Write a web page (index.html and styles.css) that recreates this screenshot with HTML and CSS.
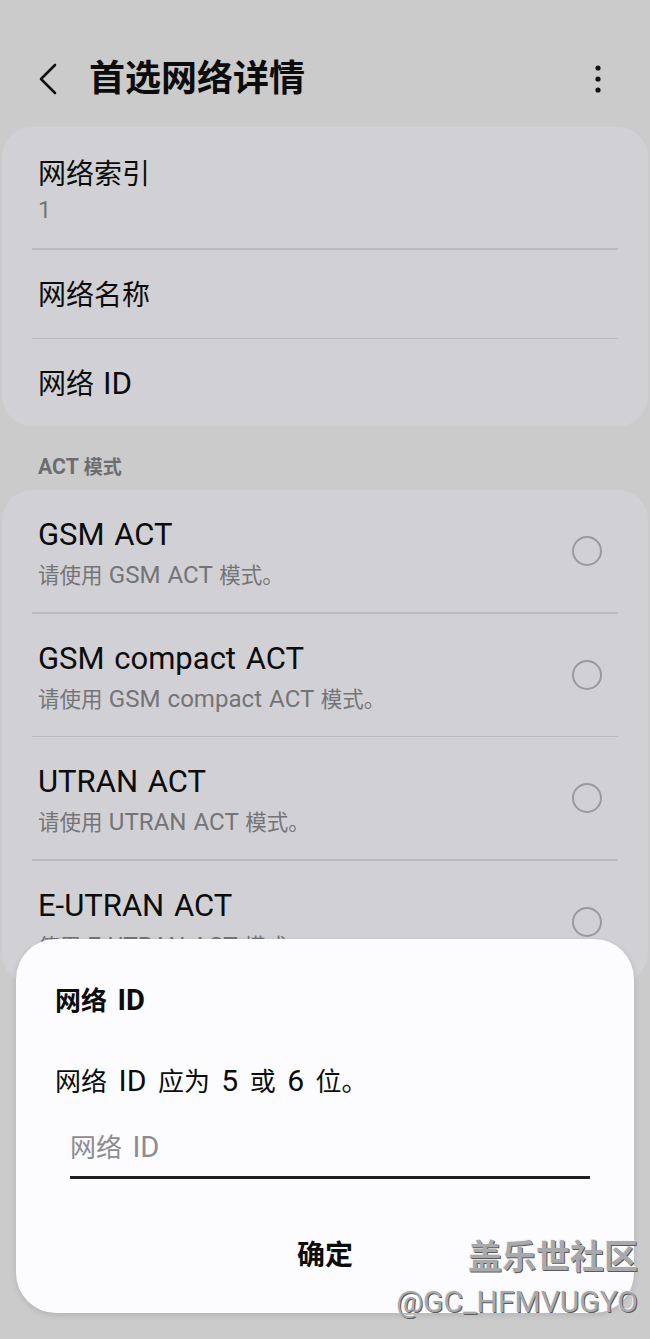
FILE: index.html
```html
<!DOCTYPE html>
<html lang="zh-CN">
<head>
    <meta charset="UTF-8">
    <meta name="viewport" content="width=device-width, initial-scale=1.0">
    <title>首选网络详情</title>
    <link rel="stylesheet" href="styles.css">
</head>
<body>

<div class="screen">
    <!-- Header -->
    <div class="header">
        <svg class="back-icon" width="24" height="34" viewBox="0 0 24 34">
            <polyline points="17,3 3,17 17,31" fill="none" stroke="#111" stroke-width="2.6" stroke-linecap="round" stroke-linejoin="round"/>
        </svg>
        <h1 class="title">首选网络详情</h1>
        <svg class="more-icon" width="10" height="30" viewBox="0 0 10 30">
            <circle cx="5" cy="4" r="2.6" fill="#111"/>
            <circle cx="5" cy="15" r="2.6" fill="#111"/>
            <circle cx="5" cy="26" r="2.6" fill="#111"/>
        </svg>
    </div>

    <!-- Network info card -->
    <div class="card">
        <div class="row row-tall">
            <div class="row-title">网络索引</div>
            <div class="row-sub"><span class="en">1</span></div>
        </div>
        <div class="divider"></div>
        <div class="row row-single">
            <div class="row-title">网络名称</div>
        </div>
        <div class="divider"></div>
        <div class="row row-single row-last">
            <div class="row-title">网络 <span class="en">ID</span></div>
        </div>
    </div>

    <div class="section-label"><span class="en">ACT</span> 模式</div>

    <!-- ACT mode card -->
    <div class="card">
        <div class="row row-radio">
            <div class="row-text">
                <div class="row-title en-title">GSM ACT</div>
                <div class="row-sub">请使用 <span class="en">GSM ACT</span> 模式。</div>
            </div>
            <span class="radio"></span>
        </div>
        <div class="divider"></div>
        <div class="row row-radio">
            <div class="row-text">
                <div class="row-title en-title">GSM compact ACT</div>
                <div class="row-sub">请使用 <span class="en">GSM compact ACT</span> 模式。</div>
            </div>
            <span class="radio"></span>
        </div>
        <div class="divider"></div>
        <div class="row row-radio">
            <div class="row-text">
                <div class="row-title en-title">UTRAN ACT</div>
                <div class="row-sub">请使用 <span class="en">UTRAN ACT</span> 模式。</div>
            </div>
            <span class="radio"></span>
        </div>
        <div class="divider"></div>
        <div class="row row-radio">
            <div class="row-text">
                <div class="row-title en-title">E-UTRAN ACT</div>
                <div class="row-sub">使用 <span class="en">E-UTRAN ACT</span> 模式。</div>
            </div>
            <span class="radio"></span>
        </div>
    </div>

    <!-- Dialog -->
    <div class="dialog">
        <div class="dialog-title">网络 <span class="en">ID</span></div>
        <div class="dialog-msg">网络 <span class="en">ID</span> 应为 <span class="en">5</span> 或 <span class="en">6</span> 位。</div>
        <div class="dialog-input">网络 <span class="en">ID</span></div>
        <div class="dialog-btn">确定</div>
    </div>

    <!-- Watermark -->
    <div class="watermark">
        <div class="wm-big">盖乐世社区</div>
        <div class="wm-small">@GC_HFMVUGYO</div>
    </div>
</div>

</body>
</html>
```

FILE: styles.css
```css
body {
    margin: 0;
    padding: 0;
    background-color: #cbcbcc;
    font-family: Roboto, "Noto Sans CJK SC", sans-serif;
    color: #0c0c0c;
}
.screen {
    position: relative;
    width: 650px;
    height: 1339px;
    overflow: hidden;
}
/* latin runs are drawn a bit larger than the CJK text around them */
.en {
    font-size: 1.12em;
    line-height: 1;
}
.header {
    display: flex;
    align-items: center;
    height: 97px;
    padding-top: 30px;
}
.back-icon {
    margin-left: 38px;
    margin-right: 27px;
}
.title {
    flex: 1;
    margin: 0;
    font-size: 36px;
    font-weight: 700;
    line-height: 44px;
}
.more-icon {
    margin-right: 47px;
}
.card {
    margin: 0 2px;
    background-color: #d1d1d5;
    border-radius: 30px;
}
.row {
    padding: 0 36px;
}
.row-title {
    font-size: 28px;
    line-height: 34px;
    word-spacing: 2px;
}
.row-sub {
    font-size: 21px;
    line-height: 32px;
    color: #747477;
    word-spacing: 1px;
}
.row-tall {
    padding-top: 31px;
    padding-bottom: 24px;
}
.row-tall .row-sub {
    margin-top: 3px;
    margin-bottom: -3px;
}
.row-single {
    display: flex;
    align-items: center;
    height: 88px;
    padding-top: 4px;
    box-sizing: border-box;
}
.row-last {
    height: 87px;
}
.divider {
    height: 1.5px;
    margin: 0 30px;
    background-color: #bbbbbf;
}
.section-label {
    padding: 29px 38px 9px;
    font-size: 19px;
    line-height: 26px;
    font-weight: 700;
    color: #6d6d70;
}
.row-radio {
    display: flex;
    align-items: center;
    height: 122px;
    padding-right: 46px;
}
.row-text {
    flex: 1;
    align-self: flex-start;
    padding-top: 28px;
}
.en-title {
    font-size: 31px;
}
.row-text .row-sub {
    margin-top: 9px;
    font-size: 21.5px;
    line-height: 30px;
}
.radio {
    width: 26px;
    height: 26px;
    border: 2.5px solid #9a9a9c;
    border-radius: 50%;
}
.dialog {
    position: absolute;
    left: 16px;
    top: 939px;
    width: 618px;
    height: 374px;
    box-sizing: border-box;
    padding: 44px 44px 0 39px;
    background-color: #fcfcfe;
    border-radius: 40px;
    box-shadow: 0 2px 6px rgba(0, 0, 0, 0.12);
}
.dialog-title {
    font-size: 26px;
    font-weight: 700;
    line-height: 36px;
    word-spacing: 4px;
}
.dialog-msg {
    margin-top: 45px;
    font-size: 26px;
    line-height: 36px;
    word-spacing: 5px;
}
.dialog-msg .en {
    font-size: 1.16em;
}
.dialog-input {
    margin: 30px 0 0 15px;
    padding-bottom: 10px;
    border-bottom: 3px solid #1f1f21;
    font-size: 26px;
    line-height: 36px;
    color: #8c8c8e;
    word-spacing: 4px;
}
.dialog-btn {
    margin-top: 59px;
    margin-left: 5px;
    text-align: center;
    font-size: 28px;
    font-weight: 700;
    line-height: 36px;
}
.watermark {
    position: absolute;
    right: 12px;
    top: 1237px;
    text-align: right;
    color: #a9a9ab;
    text-shadow: 1px 1px 0 #5a5a5c, -1px -1px 0 #f4f4f4;
}
.wm-big {
    font-size: 34px;
    font-weight: 700;
    line-height: 40px;
}
.wm-small {
    margin-top: 9px;
    font-size: 30px;
    line-height: 32px;
}
```
